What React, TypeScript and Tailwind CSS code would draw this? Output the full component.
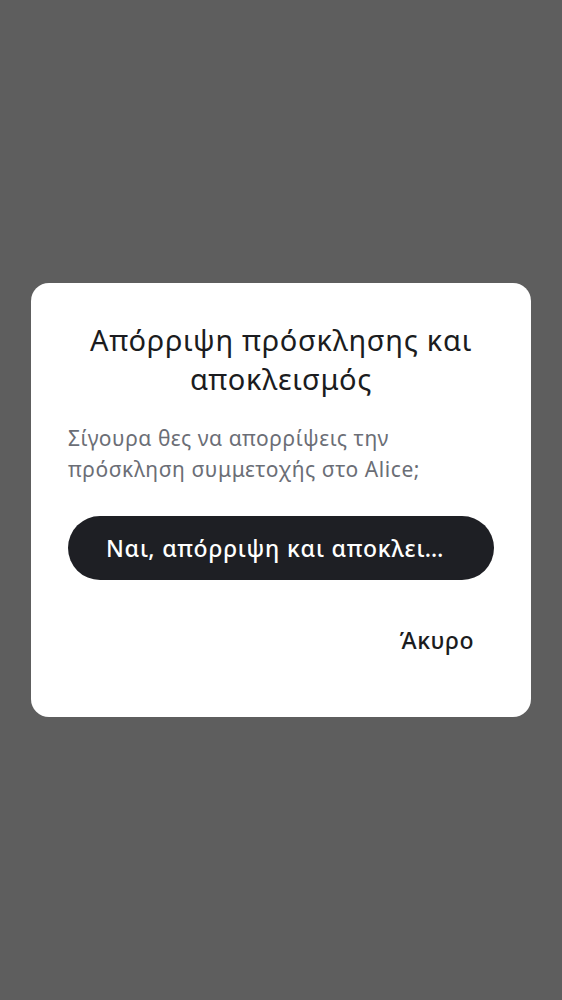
export default function App() {
  return (
    <div
      className="flex h-[1000px] w-full items-center justify-center bg-[#5e5e5e] px-[31px]"
      style={{ fontFamily: "'Noto Sans', Roboto, sans-serif" }}
    >
      <div className="flex w-full flex-col rounded-[18px] bg-white px-[37px] pb-[51px] pt-[37px]">
        <h1 className="text-center text-[29px] font-normal leading-[39px] tracking-[0.7px] text-[#1b1c20]">
          Απόρριψη πρόσκλησης και αποκλεισμός
        </h1>
        <p className="mt-[25px] text-[21px] leading-[31px] tracking-[0.55px] text-[#6b6e76]">
          Σίγουρα θες να απορρίψεις την πρόσκληση συμμετοχής στο Alice;
        </p>
        <button className="mt-[31px] h-[64px] w-full truncate rounded-full bg-[#1e1f24] px-[38px] text-left text-[23px] font-medium tracking-[0.8px] text-white">
          Ναι, απόρριψη και αποκλεισμός
        </button>
        <div className="mt-[35px] flex justify-end">
          <button className="px-[20px] py-[8px] text-[23px] font-medium tracking-[0.5px] text-[#1b1c20]">
            Άκυρο
          </button>
        </div>
      </div>
    </div>
  );
}
